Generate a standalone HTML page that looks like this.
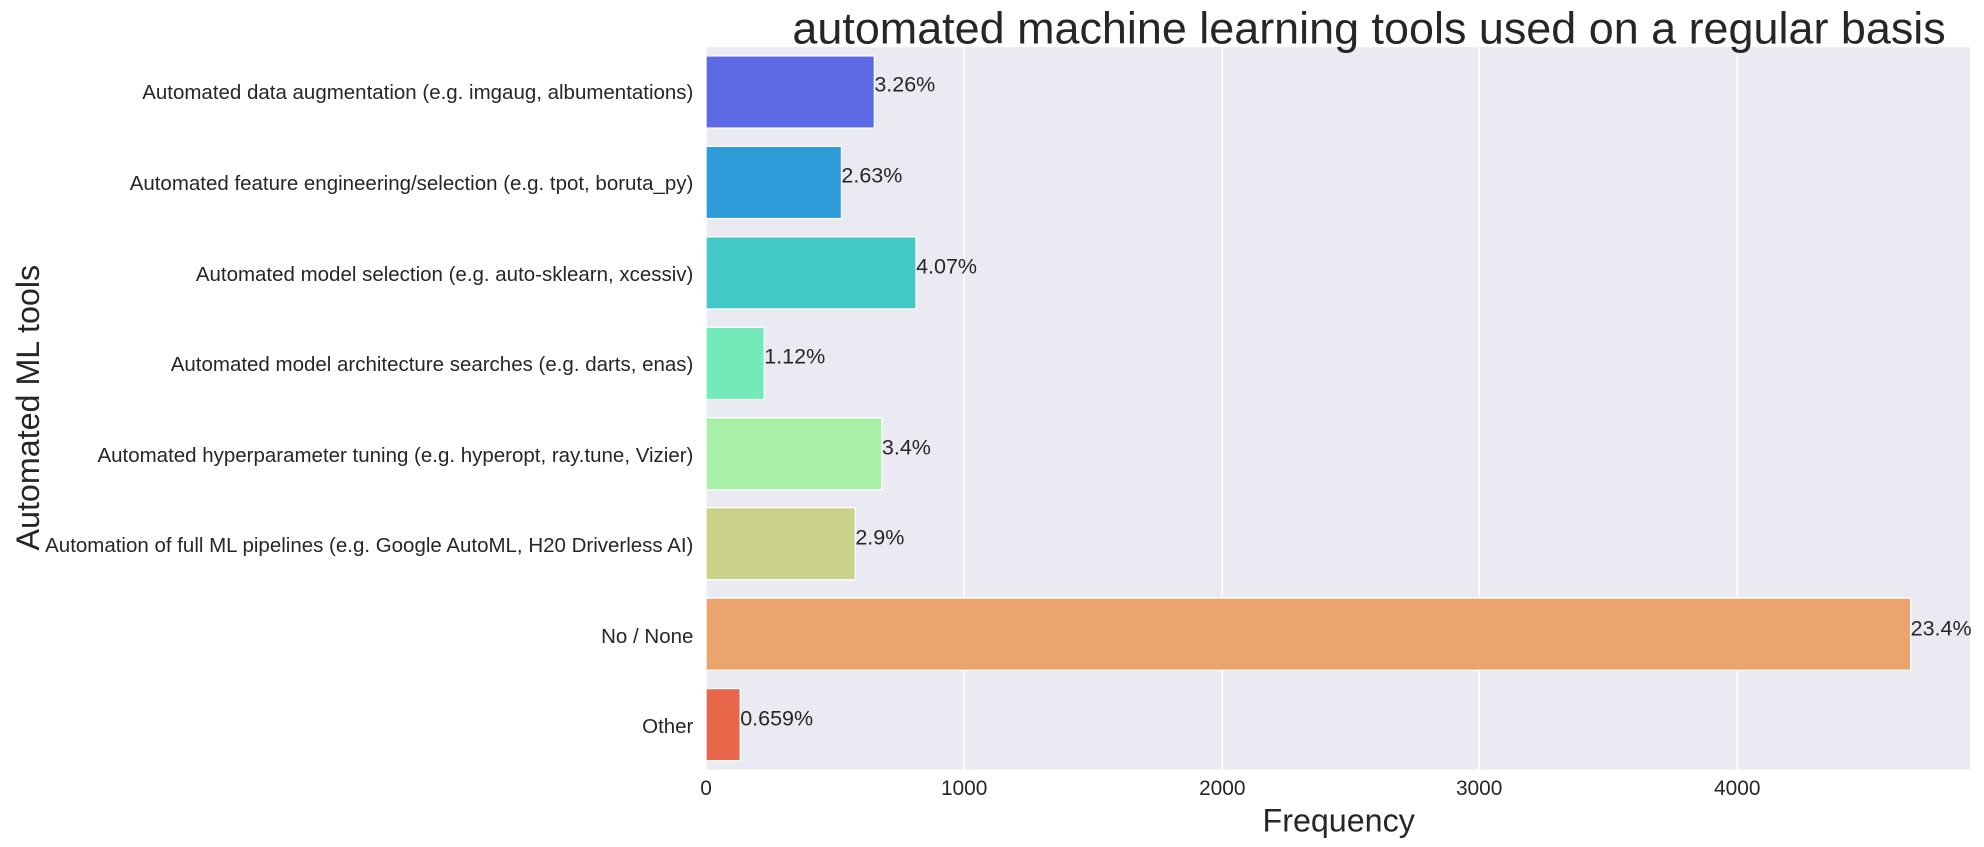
<!DOCTYPE html>
<html><head><meta charset="utf-8"><style>html,body{margin:0;padding:0;background:#fff}svg{display:block}</style></head>
<body>
<svg width="1984" height="847" viewBox="0 0 1568 669" xmlns="http://www.w3.org/2000/svg" font-family="Liberation Sans, Arial, sans-serif">
<rect x="0" y="0" width="1568" height="669" fill="#fff"/>
<rect x="558" y="37" width="999" height="571" fill="#eaeaf2"/>
<g stroke="#fff" stroke-width="1.3">
<line x1="558" y1="37" x2="558" y2="608"/>
<line x1="762" y1="37" x2="762" y2="608"/>
<line x1="966" y1="37" x2="966" y2="608"/>
<line x1="1169" y1="37" x2="1169" y2="608"/>
<line x1="1373" y1="37" x2="1373" y2="608"/>
</g>
<g stroke="#fff" stroke-width="1">
<rect x="558" y="44" width="133" height="57" fill="#5d6ae6"/>
<rect x="558" y="115.5" width="107" height="57" fill="#2d9cd8"/>
<rect x="558" y="187" width="166" height="57" fill="#43c8c8"/>
<rect x="558" y="258.5" width="46" height="57" fill="#73eab9"/>
<rect x="558" y="330" width="139" height="57" fill="#a8f0a8"/>
<rect x="558" y="401" width="118" height="57" fill="#cdd28a"/>
<rect x="558" y="472.5" width="952" height="57" fill="#eba46c"/>
<rect x="558" y="544" width="27" height="57" fill="#e8674a"/>
</g>
<g font-size="17" fill="#262626">
<text x="691" y="72">3.26%</text>
<text x="665" y="144">2.63%</text>
<text x="724" y="216">4.07%</text>
<text x="604" y="287">1.12%</text>
<text x="697" y="359">3.4%</text>
<text x="676" y="430">2.9%</text>
<text x="1510" y="502">23.4%</text>
<text x="585" y="573">0.659%</text>
</g>
<g font-size="16.2" fill="#262626" text-anchor="end">
<text x="548" y="78">Automated data augmentation (e.g. imgaug, albumentations)</text>
<text x="548" y="150">Automated feature engineering/selection (e.g. tpot, boruta_py)</text>
<text x="548" y="222">Automated model selection (e.g. auto-sklearn, xcessiv)</text>
<text x="548" y="293">Automated model architecture searches (e.g. darts, enas)</text>
<text x="548" y="365">Automated hyperparameter tuning (e.g. hyperopt, ray.tune, Vizier)</text>
<text x="548" y="436">Automation of full ML pipelines (e.g. Google AutoML, H20 Driverless AI)</text>
<text x="548" y="508">No / None</text>
<text x="548" y="579">Other</text>
</g>
<g font-size="16.5" fill="#262626" text-anchor="middle">
<text x="558" y="628">0</text>
<text x="762" y="628">1000</text>
<text x="966" y="628">2000</text>
<text x="1169" y="628">3000</text>
<text x="1373" y="628">4000</text>
</g>
<text x="1058" y="657" font-size="25.5" fill="#262626" text-anchor="middle">Frequency</text>
<text transform="translate(31,322) rotate(-90)" font-size="25.5" fill="#262626" text-anchor="middle">Automated ML tools</text>
<text x="1082" y="34" font-size="35.5" fill="#262626" text-anchor="middle">automated machine learning tools used on a regular basis</text>
</svg>
</body></html>
